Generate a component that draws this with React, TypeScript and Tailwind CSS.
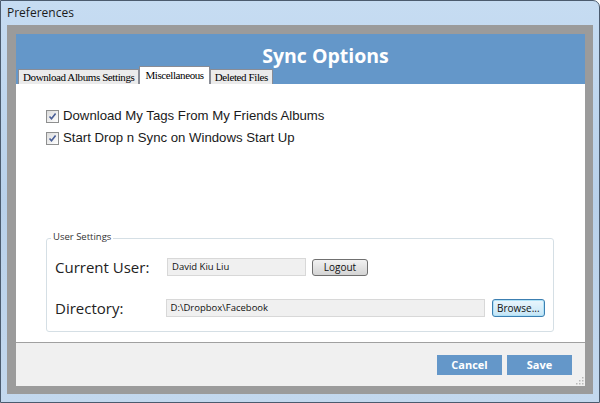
import React from "react";

function Check({ label }: { label: string }) {
  return (
    <div className="flex items-center gap-[4px] h-[22px] shrink-0">
      <div className="w-[13px] h-[13px] border border-[#8e8f8f] bg-gradient-to-br from-[#dcdcdc] to-[#ffffff] flex items-center justify-center">
        <svg width="9" height="9" viewBox="0 0 9 9">
          <path d="M1.5 4.5 L3.5 6.8 L7.6 1.6" stroke="#4a5f97" strokeWidth="1.6" fill="none" />
        </svg>
      </div>
      <span
        className="text-[13.2px] text-[#1a1a1a] leading-none"
        style={{ fontFamily: '"Liberation Sans", Arial, sans-serif' }}
      >
        {label}
      </span>
    </div>
  );
}

function Tab({ label, active }: { label: string; active?: boolean }) {
  return (
    <div
      className={
        active
          ? "h-[18px] px-[5px] bg-white border border-b-0 border-[#898c95] flex items-center text-[11px] text-black"
          : "h-[15px] px-[4px] bg-[#ebebeb] border border-b-0 border-[#898c95] flex items-center text-[11px] text-black"
      }
      style={{ fontFamily: '"Liberation Serif", serif', letterSpacing: "-0.4px" }}
    >
      {label}
    </div>
  );
}

export default function App() {
  return (
    <div
      className="w-[600px] h-[403px] flex flex-col bg-gradient-to-b from-[#c6dcf2] via-[#b9d1ea] to-[#c3d8ee] border border-[#4b5b6e] rounded-tr-[7px] overflow-hidden"
      style={{ fontFamily: '"Open Sans", "DejaVu Sans", sans-serif' }}
    >
      <div className="h-[24px] px-[6px] flex items-center text-[12px] text-[#1b1b1b] shrink-0">Preferences</div>
      <div className="ml-[6px] w-[586px] h-[369px] shrink-0 border-t-[9px] border-l-[9px] border-r-[8px] border-b-[8px] border-[#9b9b9b] flex flex-col">
        <div className="h-[50px] shrink-0 bg-[#6497c9] flex flex-col">
          <div className="flex-1 flex justify-center pl-[50px] pt-[12px]">
            <span className="text-white font-bold text-[19.5px] leading-none">Sync Options</span>
          </div>
          <div className="flex items-end pl-[2px]">
            <Tab label="Download Albums Settings" />
            <Tab label="Miscellaneous" active />
            <Tab label="Deleted Files" />
          </div>
        </div>
        <div className="h-[259px] shrink-0 bg-white border-b border-[#a0a0a0] flex flex-col pl-[30px] pt-[21px]">
          <Check label="Download My Tags From My Friends Albums" />
          <Check label="Start Drop n Sync on Windows Start Up" />
          <div className="mt-[89px] shrink-0 relative w-[508px] h-[94px] border border-[#d5dfe5] rounded-[3px] flex flex-col px-[8px] pt-[18px]">
            <span className="absolute -top-[7px] left-[4px] bg-white px-[2px] text-[9.5px] text-[#333] leading-none">User Settings</span>
            <div className="flex items-center h-[20px]">
              <span className="w-[112px] text-[15px] text-[#222] leading-none">Current User:</span>
              <div className="w-[139px] h-[18px] bg-[#f0f0f0] border border-[#d8d8d8] flex items-center px-[4px] text-[9.5px] text-[#111]">
                David Kiu Liu
              </div>
              <div className="ml-[6px] w-[56px] h-[17px] rounded-[3px] border border-[#707070] bg-gradient-to-b from-[#f2f2f2] to-[#d4d4d4] flex items-center justify-center text-[10px] text-[#111]">
                Logout
              </div>
            </div>
            <div className="flex items-center h-[20px] mt-[21px]">
              <span className="w-[112px] text-[15px] text-[#222] leading-none">Directory:</span>
              <div className="w-[323px] h-[18px] bg-[#f0f0f0] border border-[#d8d8d8] flex items-center px-[4px] text-[9.5px] text-[#111]">
                D:\Dropbox\Facebook
              </div>
              <div className="ml-[7px] w-[54px] h-[18px] rounded-[3px] border border-[#3c7fb1] bg-gradient-to-b from-[#eaf6fd] to-[#c4e5f6] flex items-center justify-center text-[10px] text-[#111] shadow-[inset_0_0_0_1px_#aee1f7]">
                Browse...
              </div>
            </div>
          </div>
        </div>
        <div className="flex-1 bg-[#f0f0f0] flex justify-end items-start pt-[12px] pr-[13px] gap-[5px] relative">
          <div className="w-[65px] h-[20px] bg-[#6497c9] flex items-center justify-center text-white font-bold text-[11px]">Cancel</div>
          <div className="w-[65px] h-[20px] bg-[#6497c9] flex items-center justify-center text-white font-bold text-[11px]">Save</div>
          <svg className="absolute right-[1px] bottom-[1px]" width="8" height="8" viewBox="0 0 8 8">
            <rect x="6" y="0" width="1.5" height="1.5" fill="#b8b8b8" />
            <rect x="3" y="3" width="1.5" height="1.5" fill="#b8b8b8" />
            <rect x="6" y="3" width="1.5" height="1.5" fill="#b8b8b8" />
            <rect x="0" y="6" width="1.5" height="1.5" fill="#b8b8b8" />
            <rect x="3" y="6" width="1.5" height="1.5" fill="#b8b8b8" />
            <rect x="6" y="6" width="1.5" height="1.5" fill="#b8b8b8" />
          </svg>
        </div>
      </div>
    </div>
  );
}
